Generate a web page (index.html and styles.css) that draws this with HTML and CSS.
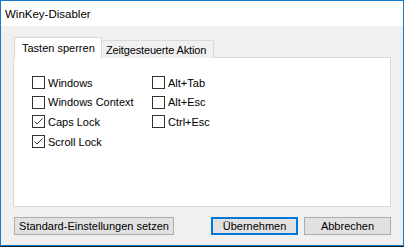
FILE: index.html
```html
<!DOCTYPE html>
<html>
<head>
<meta charset="utf-8">
<link rel="stylesheet" href="styles.css">
</head>
<body>
<div class="window">
  <div class="titlebar">WinKey-Disabler</div>
  <div class="client">
    <div class="tabs">
      <div class="tab tab-active">Tasten sperren</div>
      <div class="tab tab-second">Zeitgesteuerte Aktion</div>
    </div>
    <div class="panel">
      <div class="col">
        <label class="check"><span class="box"></span>Windows</label>
        <label class="check"><span class="box"></span>Windows Context</label>
        <label class="check"><span class="box"><svg viewBox="0 0 11 11" width="11" height="11"><polyline points="1.5,5.5 4,8 9.5,2.5" fill="none" stroke="#333" stroke-width="1"/></svg></span>Caps Lock</label>
        <label class="check"><span class="box"><svg viewBox="0 0 11 11" width="11" height="11"><polyline points="1.5,5.5 4,8 9.5,2.5" fill="none" stroke="#333" stroke-width="1"/></svg></span>Scroll Lock</label>
      </div>
      <div class="col">
        <label class="check"><span class="box"></span>Alt+Tab</label>
        <label class="check"><span class="box"></span>Alt+Esc</label>
        <label class="check"><span class="box"></span>Ctrl+Esc</label>
      </div>
    </div>
    <div class="buttons">
      <div class="btn btn-wide">Standard-Einstellungen setzen</div>
      <div class="spacer"></div>
      <div class="btn btn-default">Übernehmen</div>
      <div class="btn">Abbrechen</div>
    </div>
  </div>
</div>
</body>
</html>
```
FILE: styles.css
```css
html, body {
  margin: 0;
  padding: 0;
}
body {
  width: 404px;
  height: 247px;
  background: #15262b;
  font-family: "Liberation Sans", Arial, sans-serif;
  font-size: 11px;
  color: #000;
  overflow: hidden;
}
.window {
  width: 404px;
  height: 246px;
  box-sizing: border-box;
  border: 1px solid #1979c9;
  background: #f0f0f0;
  display: flex;
  flex-direction: column;
}
.titlebar {
  height: 25px;
  background: #fff;
  padding-left: 4px;
  line-height: 26px;
  font-size: 11.5px;
  box-sizing: border-box;
  white-space: nowrap;
}
.client {
  flex: 1;
  padding: 11px 12px 0 12px;
  display: flex;
  flex-direction: column;
}
.tabs {
  display: flex;
  align-items: flex-end;
  height: 21px;
  position: relative;
  z-index: 1;
  margin-bottom: -1px;
}
.tab {
  height: 18px;
  line-height: 18px;
  box-sizing: border-box;
  border: 1px solid #d9d9d9;
  border-bottom: none;
  background: #f0f0f0;
  padding: 0 5px;
  margin-left: -1px;
  white-space: nowrap;
}
.tab-second {
  width: 113px;
  padding: 0 0 0 4px;
  letter-spacing: -0.15px;
}
.tab-active {
  height: 21px;
  line-height: 20px;
  background: #fff;
  margin-left: 1px;
  width: 88px;
  padding: 0 0 0 7px;
  position: relative;
}
.panel {
  width: 378px;
  height: 150px;
  box-sizing: border-box;
  border: 1px solid #d9d9d9;
  background: #fff;
  padding: 18px 0 0 18px;
  display: flex;
}
.col {
  width: 120px;
  display: flex;
  flex-direction: column;
}
.check {
  display: flex;
  align-items: center;
  height: 13px;
  margin-bottom: 6.7px;
  white-space: nowrap;
}
.box {
  width: 13px;
  height: 13px;
  box-sizing: border-box;
  border: 1px solid #333;
  background: #fff;
  margin-right: 3px;
  display: flex;
  align-items: center;
  justify-content: center;
  flex: none;
}
.box svg {
  display: block;
}
.buttons {
  display: flex;
  margin-top: 10px;
  padding-left: 1px;
}
.spacer {
  flex: 1;
}
.btn {
  height: 18px;
  box-sizing: border-box;
  border: 1px solid #adadad;
  background: #e1e1e1;
  text-align: center;
  line-height: 16px;
  width: 87px;
  margin-left: 6px;
  white-space: nowrap;
}
.btn-wide {
  width: 160px;
  margin-left: 0;
}
.btn-default {
  border: 2px solid #0078d7;
  line-height: 14px;
  margin-left: 0;
}
```
